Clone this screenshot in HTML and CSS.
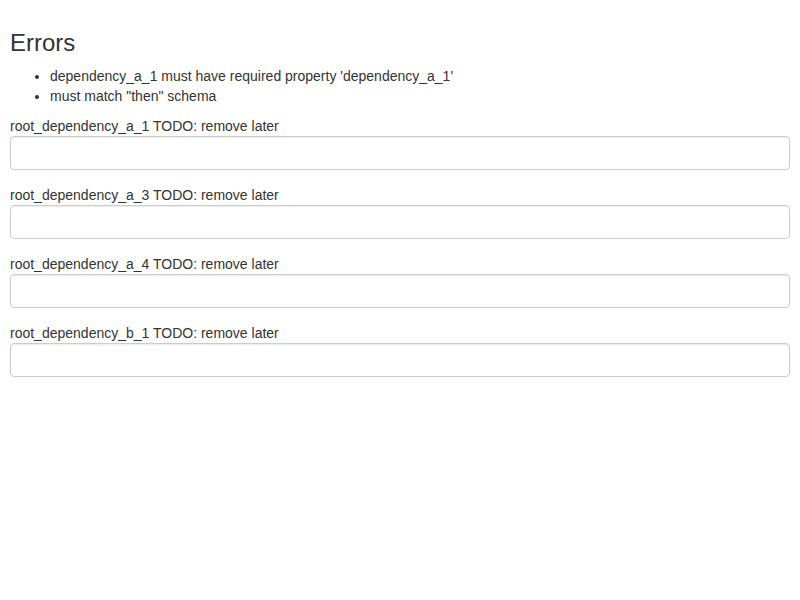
FILE: index.html
```html
<!DOCTYPE html>
<html>
<head>
<meta charset="utf-8">
<link rel="stylesheet" href="styles.css">
</head>
<body>
<div class="page">
  <h3 class="errors-title">Errors</h3>
  <ul class="error-list">
    <li>dependency_a_1 must have required property 'dependency_a_1'</li>
    <li>must match "then" schema</li>
  </ul>
  <div class="form-group">
    <label class="field-label">root_dependency_a_1 TODO: remove later</label>
    <input class="form-control" type="text">
  </div>
  <div class="form-group">
    <label class="field-label">root_dependency_a_3 TODO: remove later</label>
    <input class="form-control" type="text">
  </div>
  <div class="form-group">
    <label class="field-label">root_dependency_a_4 TODO: remove later</label>
    <input class="form-control" type="text">
  </div>
  <div class="form-group">
    <label class="field-label">root_dependency_b_1 TODO: remove later</label>
    <input class="form-control" type="text">
  </div>
</div>
</body>
</html>
```
FILE: styles.css
```css
html, body {
  margin: 0;
  padding: 0;
  background: #fff;
}
body {
  font-family: "Liberation Sans", Arial, sans-serif;
  font-size: 14px;
  line-height: 20px;
  color: #333;
}
.page {
  padding: 10px 10px;
}
.errors-title {
  font-size: 24px;
  font-weight: 500;
  line-height: 1.1;
  margin: 20px 0 10px;
}
.error-list {
  margin: 0 0 10px;
  padding-left: 40px;
}
.form-group {
  margin-bottom: 15px;
}
.field-label {
  display: block;
  font-weight: normal;
  margin: 0;
}
.form-control {
  display: block;
  box-sizing: border-box;
  width: 100%;
  height: 34px;
  margin: 0;
  padding: 6px 12px;
  font: inherit;
  color: #555;
  background: #fff;
  border: 1px solid #ccc;
  border-radius: 4px;
  box-shadow: inset 0 1px 1px rgba(0,0,0,0.075);
  outline: none;
}
```
